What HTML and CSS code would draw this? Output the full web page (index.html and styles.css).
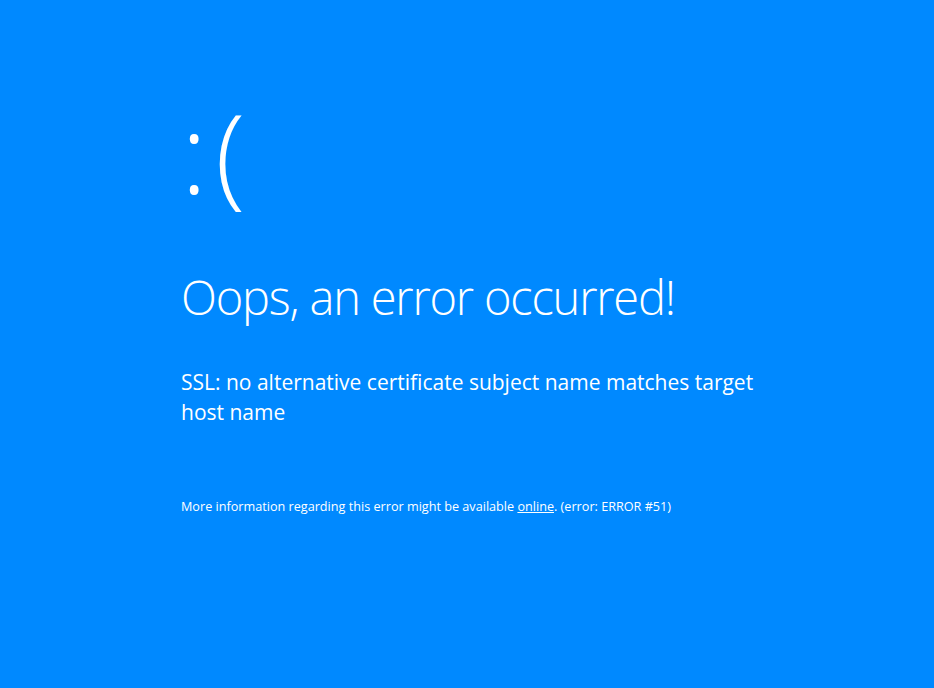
FILE: index.html
```html
<!DOCTYPE html>
<html lang="en">
<head>
<meta charset="utf-8">
<title>Error</title>
<link rel="stylesheet" href="styles.css">
</head>
<body>
<main class="screen">
  <div class="face">:(</div>
  <h1 class="title">Oops, an error occurred!</h1>
  <p class="message">SSL: no alternative certificate subject name matches target host name</p>
  <p class="info">More information regarding this error might be available <a href="#" class="link">online</a>. (error: ERROR #51)</p>
</main>
</body>
</html>
```
FILE: styles.css
```css
html, body {
  margin: 0;
  height: 100%;
  background: #0089ff;
}
body {
  font-family: "Segoe UI", "Open Sans", "Noto Sans", sans-serif;
  color: #ffffff;
}
.screen {
  padding: 76px 0 0 181px;
  width: 600px;
}
.face {
  font-size: 110px;
  font-weight: 300;
  line-height: 150px;
  letter-spacing: 8px;
}
.title {
  margin: 39px 0 0 0;
  font-size: 47px;
  font-weight: 300;
  line-height: 64px;
  letter-spacing: -1.2px;
  white-space: nowrap;
}
.message {
  margin: 38px 0 0 0;
  font-size: 21px;
  font-weight: 400;
  line-height: 30px;
}
.info {
  margin: 70px 0 0 0;
  font-size: 12.65px;
  line-height: 18px;
  white-space: nowrap;
}
.link {
  color: #ffffff;
  text-decoration: underline;
}
```
